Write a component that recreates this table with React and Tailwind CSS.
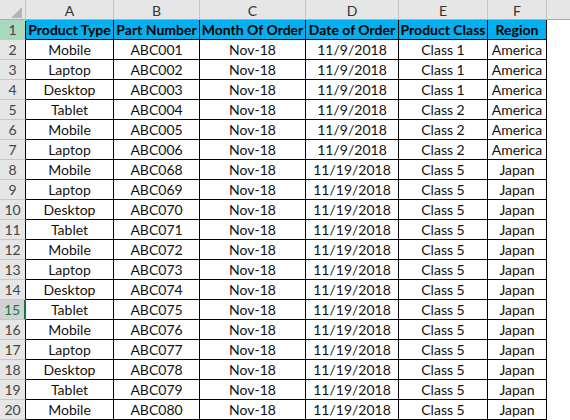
// Spreadsheet view: product order list

const cols = ["A", "B", "C", "D", "E", "F"];
const headers = ["Product Type", "Part Number", "Month Of Order", "Date of Order", "Product Class", "Region"];

const types = ["Mobile", "Laptop", "Desktop", "Tablet"];

const rows = Array.from({ length: 19 }, (_, i) => {
  const n = i + 2;
  const early = i < 6;
  const part = early ? `ABC00${i + 1}` : `ABC0${68 + (i - 6)}`;
  return {
    n,
    cells: [
      types[early ? i % 4 : (i - 6) % 4],
      part,
      "Nov-18",
      early ? "11/9/2018" : "11/19/2018",
      early ? (i < 3 ? "Class 1" : "Class 2") : "Class 5",
      early ? "America" : "Japan",
    ],
  };
});

const gridCols = "grid grid-cols-[26px_88px_86px_106px_93px_89px_59px_1fr]";

function RowHead({ n }) {
  const base = "h-5 flex items-center justify-center text-[14px] text-[#444] border-b border-[#c6c6c6]";
  if (n === 1) return <div className={`${base} bg-[#a8d9bf] border-r border-r-black`}>{n}</div>;
  if (n === 15)
    return (
      <div className={`${base} bg-[#d2d2d2] border-r-2 border-r-[#217346] text-[#217346]`}>{n}</div>
    );
  return <div className={`${base} bg-[#e6e6e6] border-r border-r-black`}>{n}</div>;
}

export default function App() {
  return (
    <div className="w-[570px] h-[420px] overflow-hidden bg-white font-['Lato','Liberation_Sans',sans-serif]">
      {/* column letters */}
      <div className={`${gridCols} h-5 bg-[#e6e6e6] border-b border-[#ababab]`}>
        <div className="relative border-r border-[#c6c6c6]">
          <div className="absolute right-[3px] bottom-[3px] w-0 h-0 border-l-[11px] border-l-transparent border-b-[11px] border-b-[#b4b4b4]" />
        </div>
        {cols.map((c) => (
          <div key={c} className="flex items-center justify-center text-[14px] text-[#333] border-r border-[#c6c6c6]">
            {c}
          </div>
        ))}
        <div />
      </div>

      {/* header row */}
      <div className={gridCols}>
        <RowHead n={1} />
        {headers.map((h) => (
          <div
            key={h}
            className="h-5 flex items-center justify-center bg-[#00b0f0] font-bold text-[14px] text-black border-r border-b border-black whitespace-nowrap overflow-hidden"
          >
            {h}
          </div>
        ))}
        <div />
      </div>

      {/* data rows */}
      {rows.map((r) => (
        <div key={r.n} className={gridCols}>
          <RowHead n={r.n} />
          {r.cells.map((v, j) => (
            <div
              key={j}
              className="h-5 flex items-center justify-center text-[14px] text-[#111] border-r border-b border-black whitespace-nowrap"
            >
              {v}
            </div>
          ))}
          <div />
        </div>
      ))}
    </div>
  );
}
